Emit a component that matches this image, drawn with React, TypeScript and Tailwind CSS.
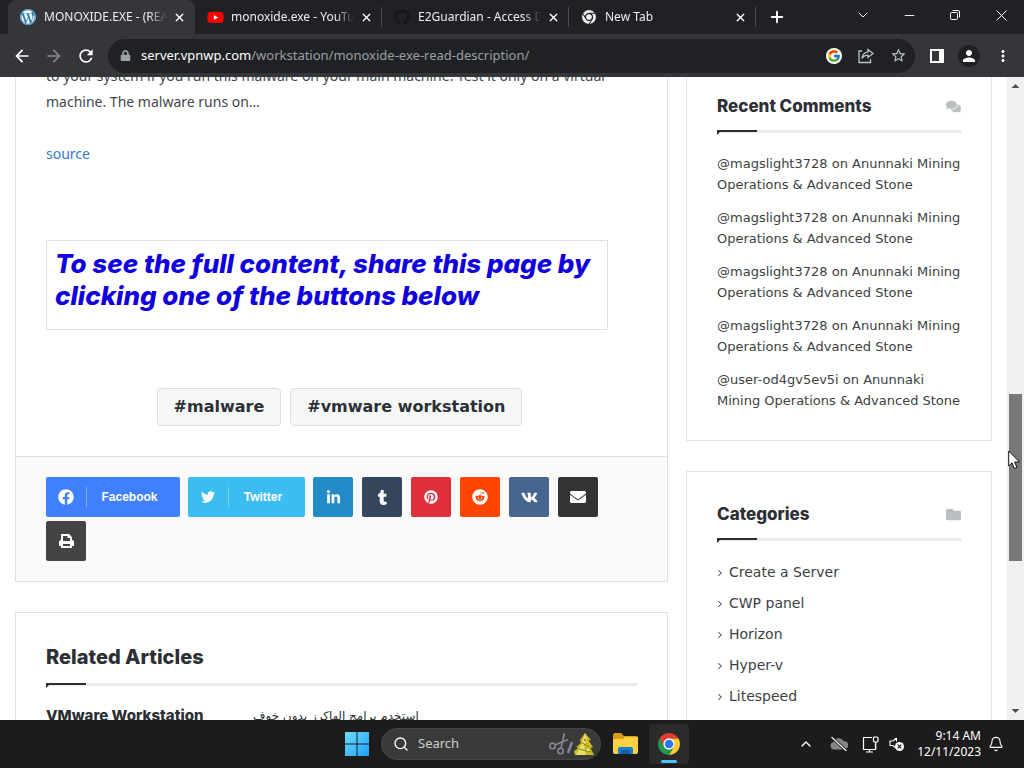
import type { ReactNode } from 'react';
import {
  FaFacebook, FaTwitter, FaLinkedinIn, FaTumblr, FaPinterest, FaReddit, FaVk,
  FaEnvelope, FaWordpress, FaYoutube, FaGithub, FaComments, FaFolder, FaLock,
} from 'react-icons/fa';
import { FcGoogle } from 'react-icons/fc';
import { MdArrowBack, MdArrowForward, MdRefresh, MdStarBorder, MdMoreVert, MdPerson } from 'react-icons/md';
import { X, Plus, ChevronDown, ChevronUp, ChevronRight, Minus, Search, Bell } from 'lucide-react';

const sector = 'M4.95 13A22 22 0 0 1 43.05 13H24A11 11 0 0 0 14.47 29.5Z';

function ChromeLogo({ className, mono = false }: { className: string; mono?: boolean }) {
  const [a, b, c, ring, core] = mono
    ? ['#f1f1f1', '#f1f1f1', '#f1f1f1', '#202124', '#f1f1f1']
    : ['#e33b2e', '#fcc934', '#229a4c', '#fff', '#2f74e8'];
  const gap = mono ? { stroke: '#202124', strokeWidth: 2.5 } : {};
  return (
    <svg viewBox="0 0 48 48" className={className} aria-hidden="true">
      <path d={sector} fill={a} {...gap} />
      <path d={sector} fill={b} transform="rotate(120 24 24)" {...gap} />
      <path d={sector} fill={c} transform="rotate(240 24 24)" {...gap} />
      <circle cx="24" cy="24" r="11.5" fill={ring} />
      <circle cx="24" cy="24" r="8.5" fill={core} />
    </svg>
  );
}

function PrintIcon() {
  return (
    <svg width="15" height="14" viewBox="0 0 15 14" aria-hidden="true">
      <path fillRule="evenodd" fill="currentColor" d="M2 0H10L13 3V6Q15 6 15 8V12H13V14H2V12H0V8Q0 6 2 6ZM4 2V7H11V4H8.500V2ZM4 10V12H11V10Z" />
    </svg>
  );
}

function Tab({ icon, title, active = false }: { icon: ReactNode; title: string; active?: boolean }) {
  return (
    <div className={`flex h-full w-[187px] items-center pl-3 pr-2 ${active ? 'rounded-t-lg bg-[#35363a]' : ''}`}>
      <span className="flex size-4 shrink-0 items-center justify-center">{icon}</span>
      <span className="ml-2 min-w-0 flex-1 overflow-hidden whitespace-nowrap text-[12px] text-[#eceef0] [mask-image:linear-gradient(to_right,black_85%,transparent)]">{title}</span>
      <button aria-label="Close tab" className="ml-1 flex size-4 items-center justify-center text-white"><X size={13} strokeWidth={2.5} /></button>
    </div>
  );
}

function Divider() {
  return <span className="-ml-px h-5 w-px bg-[#4a4c50]" />;
}

function Heading({ children, icon, large = false }: { children: ReactNode; icon?: ReactNode; large?: boolean }) {
  return (
    <div>
      <div className="flex items-center justify-between">
        <h3 className={`font-[Inter,sans-serif] font-extrabold text-[#2c2f34] ${large ? 'text-[20px] leading-7' : 'text-[17px] leading-6'}`}>{children}</h3>
        <span className="text-[15px] text-[#b9bfc1]">{icon}</span>
      </div>
      <div className="mt-3 h-[3px] bg-[#e9eaeb]">
        <svg width="40" height="5" viewBox="0 0 40 5" className="block" fill="#2c2f34" aria-hidden="true"><path d="M0 0H40V2H3L0 5Z" /></svg>
      </div>
    </div>
  );
}

const comments = [
  '@magslight3728 on Anunnaki Mining Operations & Advanced Stone',
  '@magslight3728 on Anunnaki Mining Operations & Advanced Stone',
  '@magslight3728 on Anunnaki Mining Operations & Advanced Stone',
  '@magslight3728 on Anunnaki Mining Operations & Advanced Stone',
  '@user-od4gv5ev5i on Anunnaki Mining Operations & Advanced Stone',
];
const categories = ['Create a Server', 'CWP panel', 'Horizon', 'Hyper-v', 'Litespeed'];

const shares = [
  { name: 'LinkedIn', bg: 'bg-[#238cc8]', icon: <FaLinkedinIn size={15} /> },
  { name: 'Tumblr', bg: 'bg-[#35465d]', icon: <FaTumblr size={15} /> },
  { name: 'Pinterest', bg: 'bg-[#e02f3b]', icon: <FaPinterest size={14} /> },
  { name: 'Reddit', bg: 'bg-[#ff4500]', icon: <FaReddit size={16} /> },
  { name: 'VKontakte', bg: 'bg-[#45668e]', icon: <FaVk size={17} /> },
  { name: 'Email', bg: 'bg-[#333333]', icon: <FaEnvelope size={16} /> },
  { name: 'Print', bg: 'bg-[#444444]', icon: <PrintIcon /> },
];

function Browser() {
  return (
    <header className="shrink-0 bg-[#35363a] font-['Noto_Sans',sans-serif]">
      <div className="flex h-[34px] items-center bg-[#202124] pl-2">
        <Tab active title="MONOXIDE.EXE - (REA" icon={<span className="rounded-full bg-[#2b7fae]"><FaWordpress size={16} color="#f4f8fa" /></span>} />
        <Tab title="monoxide.exe - YouTub" icon={<span className="relative flex"><span className="absolute inset-1 bg-white" /><FaYoutube size={17} color="#f00" className="relative" /></span>} />
        <Divider />
        <Tab title="E2Guardian - Access D" icon={<FaGithub size={16} color="#15171a" />} />
        <Divider />
        <Tab title="New Tab" icon={<ChromeLogo mono className="size-4" />} />
        <Divider />
        <button aria-label="New tab" className="ml-3 text-white"><Plus size={18} strokeWidth={2.5} /></button>
        <div className="ml-auto flex h-full items-center pb-1 text-white">
          <button aria-label="Search tabs" className="flex w-[46px] justify-center"><ChevronDown size={16} strokeWidth={1.5} /></button>
          <button aria-label="Minimize" className="flex w-[46px] justify-center"><Minus size={15} strokeWidth={1.5} /></button>
          <button aria-label="Restore" className="flex w-[46px] justify-center">
            <svg width="10" height="10" viewBox="0 0 10 10" fill="none" stroke="currentColor" aria-hidden="true"><rect x=".5" y="2.5" width="7" height="7" rx="1" /><path d="M2.5 .5H8A1.5 1.5 0 0 1 9.5 2V7.5" /></svg>
          </button>
          <button aria-label="Close" className="flex w-[46px] justify-center">
            <svg width="11" height="11" viewBox="0 0 11 11" stroke="currentColor" aria-hidden="true"><path d="M.5 .5L10.5 10.5M10.5 .5L.5 10.5" /></svg>
          </button>
        </div>
      </div>
      <div className="flex h-[43px] items-center px-3">
        <button aria-label="Back" className="text-white"><MdArrowBack size={20} /></button>
        <button aria-label="Forward" className="ml-3 text-[#85878b]"><MdArrowForward size={20} /></button>
        <button aria-label="Reload" className="ml-3 text-white"><MdRefresh size={20} /></button>
        <div className="ml-3 mr-[15px] flex h-[34px] min-w-0 flex-1 items-center gap-4 rounded-full bg-[#202124] pl-3 pr-2 text-[#bdc1c6]">
          <FaLock size={11} className="shrink-0 text-[#9aa0a6]" />
          <a href="#" className="-ml-1.5 flex-1 truncate text-[13px] text-[#9aa0a6]"><span className="text-white">server.vpnwp.com</span>/workstation/monoxide-exe-read-description/</a>
          <span className="rounded-full bg-white p-px"><FcGoogle size={14} /></span>
          <button aria-label="Share">
            <svg width="16" height="16" viewBox="0 0 16 16" fill="none" stroke="currentColor" strokeWidth="1.3" aria-hidden="true"><path d="M4 3H1V14.5H12.5V11M10 1.5L15 5.5L10 9.5V7.2C7 7.2 5.3 8.3 4 10.5C4.5 6.500 6.500 4.200 10 3.800Z" /></svg>
          </button>
          <button aria-label="Bookmark"><MdStarBorder size={17} /></button>
        </div>
        <div className="flex items-center gap-[14px] text-white">
          <button aria-label="Side panel"><svg width="14" height="14" viewBox="0 0 14 14" aria-hidden="true"><path fillRule="evenodd" fill="currentColor" d="M0 0H14V14H0ZM2 2V12H9V2Z" /></svg></button>
          <button aria-label="Profile" className="flex size-[22px] items-center justify-center rounded-full bg-[#202124]"><MdPerson size={18} /></button>
          <button aria-label="Menu"><MdMoreVert size={18} /></button>
        </div>
      </div>
    </header>
  );
}

function Article() {
  return (
    <article className="-mt-[14px] border border-t-0 border-[#dfe1e4]">
      <div className="px-[30px] pb-[30px]">
        <div className="whitespace-nowrap font-['Noto_Sans',sans-serif] text-[14px] leading-[26px] text-[#44474c]">
          <p>to your system if you run this malware on your main machine. Test it only on a virtual<br />machine. The malware runs on…</p>
          <a href="#" className="mt-[26px] block text-[#3478cc]">source</a>
        </div>
        <div className="mr-[29px] mt-[73px] h-[90px] border border-[#dedfe2] px-2 pt-[7px]">
          <p className="font-[Inter,sans-serif] text-[26px] font-extrabold italic leading-8 text-[#1100de]">To see the full content, share this page by clicking one of the buttons below</p>
        </div>
        <div className="mt-[58px] flex justify-center gap-[9px] pr-1 font-['DejaVu_Sans',sans-serif] text-[16px] font-bold text-[#2c2f34]">
          {['#malware', '#vmware workstation'].map((t) => (
            <a key={t} href="#" className="flex h-[38px] items-center rounded-sm border border-[#dcdfe2] bg-[#f6f7f7] px-4">{t}</a>
          ))}
        </div>
      </div>
      <div className="flex flex-wrap gap-x-2 gap-y-1 border-t border-[#dfe1e4] bg-[#fafafa] px-[30px] py-5 font-['Liberation_Sans',sans-serif] text-[12px] font-bold text-white">
        <button className="flex h-10 w-[134px] items-center rounded-xs bg-[#4080ff]">
          <span className="flex w-10 justify-center"><FaFacebook size={16} /></span>
          <span className="flex h-5 flex-1 items-center justify-center border-l border-white/35 pr-2">Facebook</span>
        </button>
        <button className="flex h-10 w-[117px] items-center rounded-xs bg-[#3bbdf2]">
          <span className="flex w-10 justify-center"><FaTwitter size={14} /></span>
          <span className="flex h-5 flex-1 items-center justify-center border-l border-white/35 pr-2">Twitter</span>
        </button>
        {shares.map((s) => (
          <button key={s.name} aria-label={s.name} className={`mr-px flex size-10 items-center justify-center rounded-xs ${s.bg}`}>{s.icon}</button>
        ))}
      </div>
    </article>
  );
}

function Page() {
  return (
    <div className="flex min-h-0 flex-1 overflow-hidden bg-white">
      <div className="flex min-w-0 flex-1 items-start gap-[18px] px-[15px]">
        <main className="min-w-0 flex-1">
          <Article />
          <section className="mt-[30px] border border-[#dfe1e4] px-[30px] py-[30px]">
            <Heading large>Related Articles</Heading>
            <div className="mt-5 grid grid-cols-3 gap-[30px] text-[15px] leading-5 text-[#2c2f34]">
              <a href="#" className="whitespace-nowrap font-[Inter,sans-serif] font-extrabold">VMware Workstation</a>
              <a href="#" lang="ar" className="whitespace-nowrap font-['DejaVu_Sans',sans-serif] text-[12px]">استخدم برامج الهاكرز بدون خوف</a>
            </div>
          </section>
        </main>
        <aside className="-mt-[14px] w-[306px] shrink-0 font-['DejaVu_Sans',sans-serif] text-[#3c3f44]">
          <section className="border border-[#e3e5e8] px-[30px] pb-[29px] pt-[30px]">
            <Heading icon={<FaComments />}>Recent Comments</Heading>
            <ul className="mt-5 flex flex-col gap-3 text-[13px] leading-[21px]">
              {comments.map((text, i) => (
                <li key={i} className="-mr-1"><a href="#" className="block">{text}</a></li>
              ))}
            </ul>
          </section>
          <section className="mt-[30px] border border-[#e3e5e8] px-[30px] py-[30px]">
            <Heading icon={<FaFolder />}>Categories</Heading>
            <ul className="mt-4 text-[14px]">
              {categories.map((c) => (
                <li key={c} className="flex h-[31px] items-center"><ChevronRight size={10} strokeWidth={2.5} className="-ml-0.5 mr-1" /><a href="#">{c}</a></li>
              ))}
            </ul>
          </section>
        </aside>
      </div>
      <div className="relative flex w-[17px] shrink-0 flex-col items-center bg-[#f1f1f1]">
        <svg width="17" height="17" viewBox="0 0 17 17" fill="#505050" aria-hidden="true"><path d="M4.500 11L8.500 7L12.500 11Z" /></svg>
        <span className="grow-[300]" />
        <span className="w-[13px] grow-[167] bg-[#787878]" />
        <span className="grow-[142]" />
        <svg width="17" height="17" viewBox="0 0 17 17" fill="#505050" aria-hidden="true"><path d="M4.500 6L8.500 10L12.500 6Z" /></svg>
        <svg width="13" height="20" viewBox="0 0 13 20" className="absolute left-px top-[373px]" aria-hidden="true"><path d="M.7 1V16L4 12.800L6.300 18.500L9 17.400L6.600 12H11.500Z" fill="#fff" stroke="#111" /></svg>
      </div>
    </div>
  );
}

function Taskbar() {
  return (
    <footer className="grid h-12 shrink-0 grid-cols-[1fr_auto_1fr] items-center bg-[#1c1c1c] font-['Noto_Sans',sans-serif] text-white">
      <div />
      <div className="flex items-center pl-[10px]">
        <button aria-label="Start">
          <svg width="24" height="24" viewBox="0 0 24 24" aria-hidden="true">
            <defs><linearGradient id="win" x1="0" y1="0" x2="1" y2="1" gradientUnits="objectBoundingBox"><stop stopColor="#6fdcff" /><stop offset="1" stopColor="#1da0f5" /></linearGradient></defs>
            <path fill="url(#win)" d="M0 0H11.500V11.500H0ZM12.500 0H24V11.500H12.500ZM0 12.500H11.500V24H0ZM12.500 12.500H24V24H12.500Z" />
          </svg>
        </button>
        <label className="ml-3 flex h-8 w-[220px] items-center rounded-full border border-[#484848] bg-[#3a3a3a] pl-[11px] pr-1">
          <Search size={16} strokeWidth={2} className="shrink-0" />
          <input aria-label="Search" placeholder="Search" className="ml-[9px] min-w-0 flex-1 bg-transparent text-[13px] outline-none placeholder:text-[#d0d0d0]" />
          <svg width="48" height="26" viewBox="0 0 48 26" aria-hidden="true">
            <g fill="none" stroke="#8b8799" strokeWidth="1.600"><circle cx="4.500" cy="15" r="2.700" /><circle cx="12.500" cy="20" r="2.700" /><path d="M7 14L20 8.500M13 17L16.500 2" /><path d="M24 11L20 22" strokeWidth="2.400" /></g>
            <path d="M37 2L43 9L40.500 9.500L45 16L42.500 17L46 24L27 24L26 20L30 17.500L28.500 16L33 12L32 9Z" fill="#c9bc2c" />
            <path d="M37 2L39 9L36 14L38 24L28 24L31 18L34 12Z" fill="#e7df62" />
            <path d="M34 12L41 16M31 18L43 21" stroke="#78851b" fill="none" />
            <circle cx="37" cy="9" r="1" fill="#bc4a25" /><circle cx="40" cy="19" r="1.200" fill="#f5f0a2" />
          </svg>
        </label>
        <button aria-label="File Explorer" className="ml-3">
          <svg width="25" height="24" viewBox="0 0 25 24" aria-hidden="true"><path d="M0 3Q0 1 2 1H8L11 4H23Q25 4 25 6V10H0Z" fill="#d89b12" /><path d="M0 7H10L12 5H25V20Q25 22 23 22H2Q0 22 0 20Z" fill="#fcd145" /><path d="M5 22V17Q5 15 7 15H18Q20 15 20 17V22Z" fill="#1680cf" /><path d="M8 18H17V22H8Z" fill="#0d62a8" /></svg>
        </button>
        <button aria-label="Chrome" className="ml-[11px] flex h-10 w-10 flex-col items-center rounded bg-[#2b2b2b] pt-2">
          <ChromeLogo className="size-6" />
          <span className="mt-1 h-[3px] w-4 rounded-full bg-[#4cc2ff]" />
        </button>
      </div>
      <div className="flex items-center justify-end pr-5">
        <ChevronUp size={16} strokeWidth={2} />
        <svg width="18" height="14" viewBox="0 0 18 14" className="ml-4" aria-hidden="true"><path d="M4 12.500A3.800 3.800 0 0 1 3.500 5A5.500 5.500 0 0 1 13.500 4A4.200 4.200 0 0 1 14.500 12.500Z" fill="#858585" /><path d="M1.500 0L16.500 14" stroke="#1c1c1c" strokeWidth="3" /><path d="M1.500 0L16.500 14" stroke="#fff" strokeWidth="1.200" /></svg>
        <svg width="17" height="17" viewBox="0 0 17 17" fill="none" stroke="#fff" strokeWidth="1.200" className="ml-[14px]" aria-hidden="true"><path d="M10 1.500H1.500V13.500H13.500V8M7.500 13.500V16M4 16H11" /><rect x="11.500" y="1" width="4.500" height="5" rx="1" /><path d="M13.700 6V13" /></svg>
        <svg width="16" height="16" viewBox="0 0 16 16" className="ml-2.5" aria-hidden="true"><path d="M7.500 2L4 5H1V9.500H4L6 11.500M7.500 2V5.500" fill="none" stroke="#fff" strokeWidth="1.100" /><circle cx="10.500" cy="10.500" r="4.500" fill="#fff" /><path d="M8.700 8.700L12.300 12.300M12.300 8.700L8.700 12.300" stroke="#1c1c1c" strokeWidth="1.200" /></svg>
        <div className="ml-3 text-right text-[12px] leading-4"><div>9:14 AM</div><div>12/11/2023</div></div>
        <Bell size={16} strokeWidth={1.700} className="ml-[7px]" />
      </div>
    </footer>
  );
}

export default function App() {
  return (
    <div className="flex h-screen flex-col overflow-hidden">
      <Browser />
      <Page />
      <Taskbar />
    </div>
  );
}
